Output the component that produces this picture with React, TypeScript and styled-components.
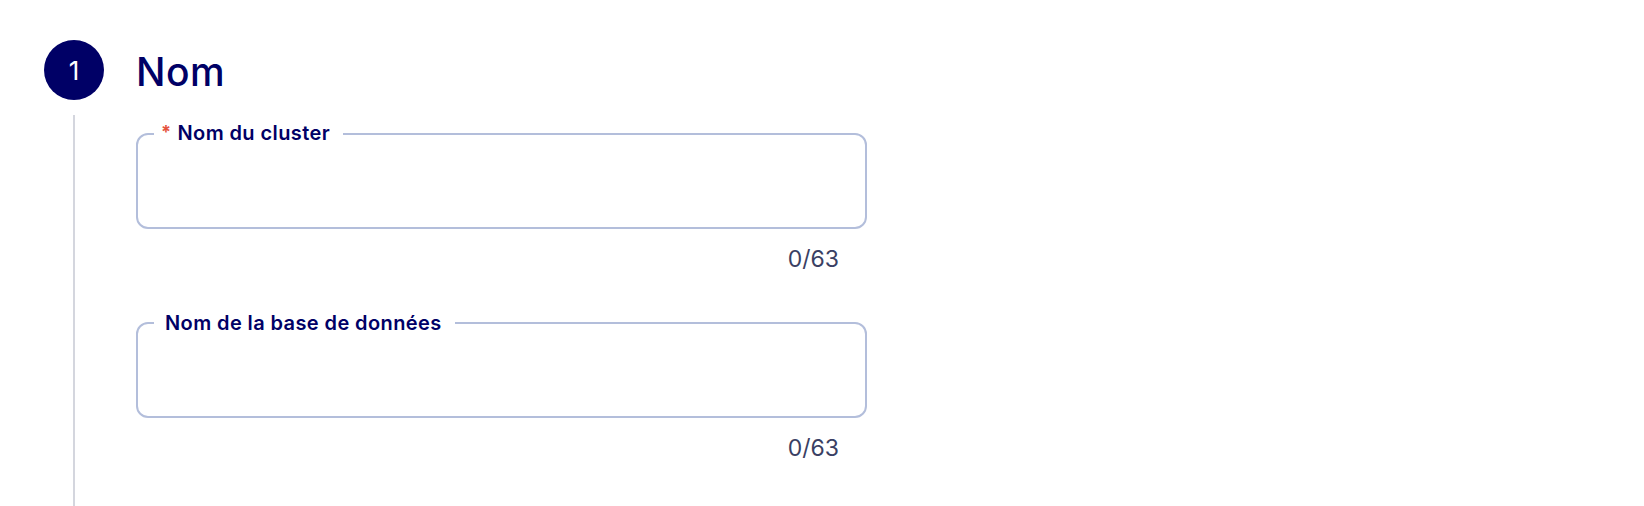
import React from "react";
import styled, { createGlobalStyle } from "styled-components";

const GlobalStyle = createGlobalStyle`
  html, body {
    margin: 0;
    padding: 0;
    background: #ffffff;
    overflow: hidden;
  }
  body {
    font-family: Inter, "Noto Sans", Arial, sans-serif;
    color: #000066;
  }
  * { box-sizing: border-box; }
`;

const Page = styled.div`
  width: 1644px;
  height: 506px;
  padding: 40px 0 0 44px;
  overflow: hidden;
`;

const Step = styled.section`
  display: grid;
  grid-template-columns: 60px 731px;
  grid-template-rows: 60px 1fr;
  column-gap: 32px;
  row-gap: 15px;
  height: 466px;
`;

const Bullet = styled.div`
  width: 60px;
  height: 60px;
  border-radius: 50%;
  background: #000066;
  color: #ffffff;
  display: flex;
  align-items: center;
  justify-content: center;
  font-size: 26px;
  font-weight: 400;
`;

const Title = styled.h2`
  margin: 0;
  align-self: center;
  font-size: 39px;
  font-weight: 550;
  color: #000066;
  line-height: 1;
  padding-top: 2px;
  letter-spacing: 0.5px;
`;

const RailCell = styled.div`
  display: flex;
  justify-content: center;
`;

const Rail = styled.div`
  width: 2px;
  height: 100%;
  background: #d4d6de;
`;

const Fields = styled.div`
  display: flex;
  flex-direction: column;
  padding-top: 6px;
  gap: 38px;
`;

const Field = styled.div`
  display: flex;
  flex-direction: column;
`;

const Box = styled.fieldset`
  margin: 0;
  padding: 0 16px 12px 16px;
  border: 2px solid #b3bedb;
  border-radius: 12px;
  min-width: 0;
`;

const Legend = styled.legend<{ $required?: boolean }>`
  padding: 0 13px 0 ${(p) => (p.$required ? "7px" : "11px")};
  margin-left: 0;
  font-size: 20px;
  font-weight: 600;
  line-height: 24px;
  letter-spacing: 0.4px;
  color: #000066;
`;

const Star = styled.span`
  color: #e5533d;
  font-size: 18px;
  font-weight: 700;
  margin-right: 6px;
  position: relative;
  top: -2px;
`;

const Input = styled.input`
  display: block;
  width: 100%;
  height: 69px;
  border: none;
  outline: none;
  background: transparent;
  font-family: inherit;
  font-size: 20px;
  color: #000066;
`;

const Counter = styled.div`
  align-self: flex-end;
  padding-right: 28px;
  margin-top: 16px;
  font-size: 23px;
  font-weight: 400;
  color: #3a3f63;
  line-height: 28px;
`;

type FieldProps = { label: string; required?: boolean; max: number };

const TextField: React.FC<FieldProps> = ({ label, required, max }) => {
  const [value, setValue] = React.useState("");
  return (
    <Field>
      <Box>
        <Legend $required={required}>
          {required && <Star>*</Star>}
          {label}
        </Legend>
        <Input
          value={value}
          maxLength={max}
          onChange={(e) => setValue(e.target.value)}
        />
      </Box>
      <Counter>
        {value.length}/{max}
      </Counter>
    </Field>
  );
};

export default function App() {
  return (
    <>
      <GlobalStyle />
      <Page>
        <Step>
          <Bullet>1</Bullet>
          <Title>Nom</Title>
          <RailCell>
            <Rail />
          </RailCell>
          <Fields>
            <TextField label="Nom du cluster" required max={63} />
            <TextField label="Nom de la base de données" max={63} />
          </Fields>
        </Step>
      </Page>
    </>
  );
}
